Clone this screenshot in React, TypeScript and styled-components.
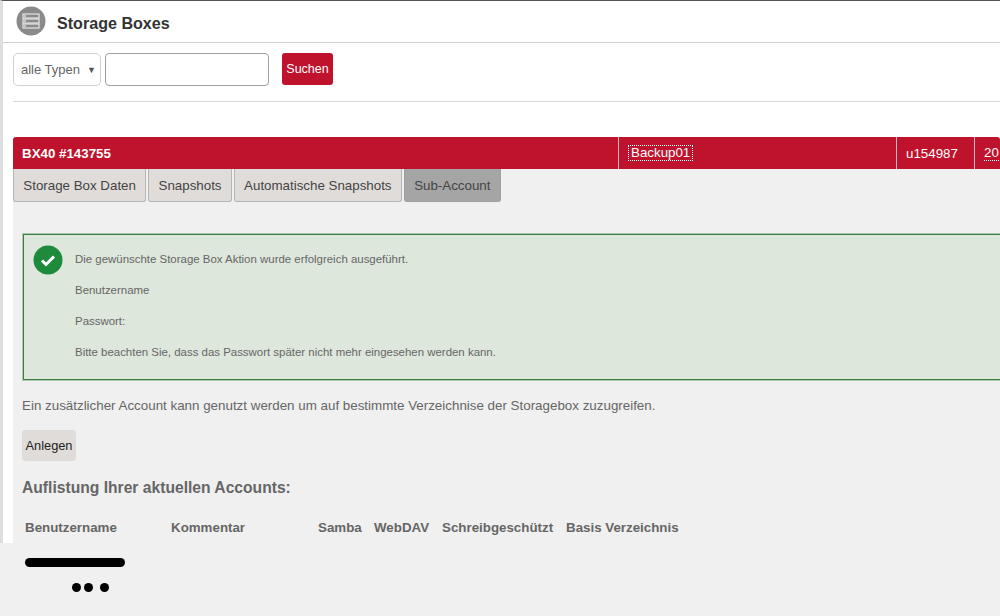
import styled, { createGlobalStyle } from "styled-components";

const GlobalStyle = createGlobalStyle`
  html, body {
    margin: 0;
    padding: 0;
    background: #f0f0f0;
  }
  body {
    font-family: "Liberation Sans", Arial, sans-serif;
  }
`;

const tabs = ["Storage Box Daten", "Snapshots", "Automatische Snapshots", "Sub-Account"];
const columns = [
  { label: "Benutzername", width: 146 },
  { label: "Kommentar", width: 147 },
  { label: "Samba", width: 56 },
  { label: "WebDAV", width: 68 },
  { label: "Schreibgeschützt", width: 124 },
  { label: "Basis Verzeichnis", width: 130 },
];

export default function App() {
  return (
    <Page>
      <GlobalStyle />
      <Frame>
        <TitleBar>
          <TitleIcon viewBox="0 0 30 30">
            <circle cx="15" cy="15" r="14.5" fill="#8a8a8a" />
            <rect x="7" y="8" width="16" height="4" fill="none" stroke="#e4e4e4" strokeWidth="1.2" />
            <rect x="7" y="13" width="16" height="4" fill="none" stroke="#e4e4e4" strokeWidth="1.2" />
            <rect x="7" y="18" width="16" height="4" fill="none" stroke="#e4e4e4" strokeWidth="1.2" />
            <circle cx="9" cy="10" r="0.9" fill="#e4e4e4" />
            <circle cx="9" cy="15" r="0.9" fill="#e4e4e4" />
            <circle cx="9" cy="20" r="0.9" fill="#e4e4e4" />
          </TitleIcon>
          <Title>Storage Boxes</Title>
        </TitleBar>
        <SearchRow>
          <TypeSelect>
            alle Typen
            <Caret>▼</Caret>
          </TypeSelect>
          <SearchInput />
          <SearchButton>Suchen</SearchButton>
        </SearchRow>
        <Divider />
        <BoxHeader>
          <BoxName>BX40 #143755</BoxName>
          <BoxCell $width={278}>
            <Editable>Backup01</Editable>
          </BoxCell>
          <BoxCell $width={78}>u154987</BoxCell>
          <BoxCell $width={26}>
            <DateLink>20</DateLink>
          </BoxCell>
        </BoxHeader>
        <Content>
          <TabRow>
            {tabs.map((tab) => (
              <Tab key={tab} $active={tab === "Sub-Account"}>
                {tab}
              </Tab>
            ))}
          </TabRow>
          <Notice>
            <NoticeIcon viewBox="0 0 30 30">
              <circle cx="15" cy="15" r="14.5" fill="#1e8a3c" />
              <path d="M9 15.5l4 4 8-8" fill="none" stroke="#fff" strokeWidth="3" />
            </NoticeIcon>
            <NoticeText>
              <p>Die gewünschte Storage Box Aktion wurde erfolgreich ausgeführt.</p>
              <p>Benutzername</p>
              <p>Passwort:</p>
              <p>Bitte beachten Sie, dass das Passwort später nicht mehr eingesehen werden kann.</p>
            </NoticeText>
          </Notice>
          <Intro>
            Ein zusätzlicher Account kann genutzt werden um auf bestimmte Verzeichnise der
            Storagebox zuzugreifen.
          </Intro>
          <AddButton>Anlegen</AddButton>
          <SectionTitle>Auflistung Ihrer aktuellen Accounts:</SectionTitle>
          <TableHead>
            {columns.map((col) => (
              <HeadCell key={col.label} $width={col.width}>
                {col.label}
              </HeadCell>
            ))}
          </TableHead>
        </Content>
      </Frame>
      <Redacted>
        <RedactedBar />
        <RedactedDots>
          <Dot />
          <Dot />
          <Dot $gap={4} />
        </RedactedDots>
      </Redacted>
    </Page>
  );
}

const Page = styled.div`
  width: 1000px;
  height: 616px;
  overflow: hidden;
  background: #f0f0f0;
`;

const Frame = styled.div`
  height: 543px;
  box-sizing: border-box;
  overflow: hidden;
  background: #fff;
  border-top: 1px solid #555;
  border-left: 3px solid #dedede;
`;

const TitleBar = styled.div`
  height: 42px;
  box-sizing: border-box;
  display: flex;
  align-items: center;
  padding: 0 0 1px 13px;
  gap: 11px;
  border-bottom: 1px solid #d0d0d0;
`;

const TitleIcon = styled.svg`
  width: 30px;
  height: 30px;
  margin-bottom: 1px;
`;

const Title = styled.h1`
  margin: 4px 0 0;
  font-size: 16.1px;
  font-weight: 700;
  color: #333;
`;

const SearchRow = styled.div`
  display: flex;
  align-items: flex-start;
  padding: 10px 0 0 10px;
  height: 33px;
`;

const TypeSelect = styled.div`
  width: 88px;
  height: 33px;
  box-sizing: border-box;
  display: flex;
  align-items: center;
  justify-content: space-between;
  padding: 0 4px 0 7px;
  background: #fff;
  border: 1px solid #d0d0d0;
  border-radius: 5px;
  font-size: 13px;
  color: #666;
`;

const Caret = styled.span`
  font-size: 9px;
  color: #555;
`;

const SearchInput = styled.div`
  width: 164px;
  height: 33px;
  box-sizing: border-box;
  margin-left: 4px;
  background: #fff;
  border: 1px solid #a0a0a0;
  border-radius: 4px;
`;

const SearchButton = styled.button`
  width: 51px;
  height: 32px;
  margin-left: 13px;
  padding: 0;
  border: 0;
  border-radius: 3px;
  background: #bf132d;
  color: #fff;
  font: 12.5px "Liberation Sans", Arial, sans-serif;
`;

const Divider = styled.div`
  margin: 15px 0 0 10px;
  height: 1px;
  background: #d8d8d8;
`;

const BoxHeader = styled.div`
  margin: 35px 0 0 10px;
  height: 32px;
  display: flex;
  background: #bf132d;
  color: #fff;
  font-size: 13.33px;
  border-radius: 3px 3px 0 0;
`;

const BoxName = styled.div`
  width: 605px;
  flex: none;
  display: flex;
  align-items: center;
  padding-left: 9px;
  box-sizing: border-box;
  font-weight: 700;
`;

const BoxCell = styled.div<{ $width: number }>`
  width: ${(p) => p.$width}px;
  flex: none;
  display: flex;
  align-items: center;
  padding-left: 9px;
  box-sizing: border-box;
  border-left: 1px solid #e3b5bd;
`;

const Editable = styled.span`
  border: 1px dotted #fff;
  padding: 0 2px;
  line-height: 14px;
`;

const DateLink = styled.span`
  border-bottom: 1px dotted #fff;
  line-height: 14px;
`;

const Content = styled.div`
  margin-left: 10px;
  height: 374px;
  margin-right: -12px;
  background: #f0f0f0;
  color: #666;
`;

const TabRow = styled.div`
  display: flex;
  gap: 2px;
`;

const Tab = styled.div<{ $active?: boolean }>`
  height: 33px;
  box-sizing: border-box;
  display: flex;
  align-items: center;
  padding: 0 9.3px;
  font-size: 13.33px;
  color: #444;
  background: ${(p) => (p.$active ? "#a5a5a5" : "#e0dcd9")};
  border: 1px solid ${(p) => (p.$active ? "#a0a0a0" : "#b5b5b5")};
  border-top: 0;
  border-radius: 0 0 3px 3px;
`;

const Notice = styled.div`
  margin: 32px 0 0 10px;
  height: 146px;
  box-sizing: border-box;
  display: flex;
  gap: 12px;
  padding: 10px 0 0 9px;
  background: #dde7dc;
  border: 1px solid #3a7f3e;
  box-shadow: 0 0 0 1px rgba(58, 127, 62, 0.35);
`;

const NoticeIcon = styled.svg`
  width: 30px;
  height: 30px;
  flex: none;
`;

const NoticeText = styled.div`
  padding-top: 8px;
  font-size: 11.45px;
  color: #666;

  p {
    margin: 0 0 19.15px;
    line-height: 12px;
  }
`;

const Intro = styled.p`
  margin: 18px 0 0 9px;
  font-size: 13.36px;
  line-height: 15px;
`;

const AddButton = styled.button`
  display: block;
  width: 54px;
  height: 31px;
  margin: 17px 0 0 9px;
  padding: 0;
  border: 0;
  border-radius: 3px;
  background: #e0dcd9;
  color: #222;
  font: 12.8px "Liberation Sans", Arial, sans-serif;
`;

const SectionTitle = styled.h2`
  margin: 18px 0 0 9px;
  font-size: 15.65px;
  line-height: 18px;
  font-weight: 700;
  color: #666;
`;

const TableHead = styled.div`
  display: flex;
  margin: 23px 0 0 12px;
`;

const HeadCell = styled.div<{ $width: number }>`
  width: ${(p) => p.$width}px;
  flex: none;
  font-size: 13.33px;
  line-height: 15px;
  font-weight: 700;
  color: #666;
`;

const Redacted = styled.div`
  height: 73px;
  padding: 15px 0 0 25px;
  box-sizing: border-box;
`;

const RedactedBar = styled.div`
  width: 100px;
  height: 9px;
  border-radius: 5px;
  background: #000;
`;

const RedactedDots = styled.div`
  display: flex;
  margin: 16px 0 0 47px;
  gap: 3px;
`;

const Dot = styled.span<{ $gap?: number }>`
  width: 9px;
  height: 9px;
  border-radius: 50%;
  background: #000;
  margin-left: ${(p) => p.$gap ?? 0}px;
`;
